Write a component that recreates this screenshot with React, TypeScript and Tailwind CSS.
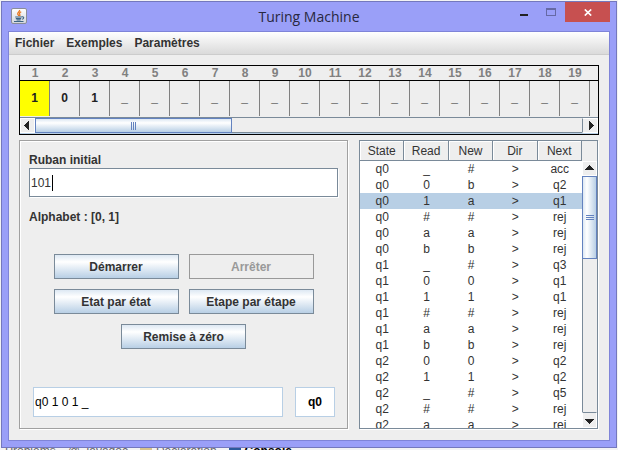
import React from "react";

const columns = ["State", "Read", "New", "Dir", "Next"];

const transitions = [
  ["q0", "_", "#", ">", "acc"],
  ["q0", "0", "b", ">", "q2"],
  ["q0", "1", "a", ">", "q1"],
  ["q0", "#", "#", ">", "rej"],
  ["q0", "a", "a", ">", "rej"],
  ["q0", "b", "b", ">", "rej"],
  ["q1", "_", "#", ">", "q3"],
  ["q1", "0", "0", ">", "q1"],
  ["q1", "1", "1", ">", "q1"],
  ["q1", "#", "#", ">", "rej"],
  ["q1", "a", "a", ">", "rej"],
  ["q1", "b", "b", ">", "rej"],
  ["q2", "0", "0", ">", "q2"],
  ["q2", "1", "1", ">", "q2"],
  ["q2", "_", "#", ">", "q5"],
  ["q2", "#", "#", ">", "rej"],
  ["q2", "a", "a", ">", "rej"],
];

const tape = ["1", "0", "1", ...Array<string>(17).fill("_")];

function JavaIcon() {
  return (
    <svg width="16" height="16" viewBox="0 0 16 16" className="shrink-0" aria-hidden="true">
      <defs>
        <linearGradient id="tile" x1="0" y1="0" x2="0" y2="1">
          <stop offset="0" stopColor="#ffffff" />
          <stop offset="1" stopColor="#d2d6dc" />
        </linearGradient>
      </defs>
      <rect x="0.5" y="0.5" width="15" height="15" rx="1.5" fill="url(#tile)" stroke="#8a8d98" />
      <path d="M8.5 2c.8 1.600-2.500 2.400-1.700 4.200.3.700.9 1 .9 1.700M10.200 3.800c-1.500.8-2.200 1.500-1.400 2.700.4.600.1 1.100-.3 1.500" fill="none" stroke="#e8761f" strokeWidth="1.300" />
      <path d="M4.200 9h6.600M4.800 10.600h5.400M5.600 12h4M3 13.500h9.500M10.800 8.800c2.600-.5 2.400 2 .2 2.400" fill="none" stroke="#3c6484" strokeWidth="1.100" />
    </svg>
  );
}

function Arrow({ points }: { points: string }) {
  return (
    <svg width="9" height="9" viewBox="0 0 9 9" className="shrink-0" shapeRendering="crispEdges" aria-hidden="true">
      <polygon points={points} fill="#222" />
    </svg>
  );
}

function ActionButton({ children, disabled }: { children: React.ReactNode; disabled?: boolean }) {
  return (
    <button
      disabled={disabled}
      className="h-[25px] w-[125px] border border-[#7a8a99] bg-linear-to-b from-[#dde8f3] via-white via-30% to-[#b8cfe5] text-center font-bold text-[#333] disabled:border-[#999] disabled:bg-none disabled:text-[#999]"
    >
      {children}
    </button>
  );
}

export default function App() {
  return (
    <div className="flex h-screen flex-col bg-[#f3f3f4] px-px pt-px font-['Liberation_Sans',Arial,sans-serif] text-[12px] leading-4 text-[#333]">
      <div className="flex min-h-0 flex-1 flex-col border border-[#7478bd] bg-[#9a9ff8] px-[6px] pb-[6px]">
        <header className="flex h-[29px] shrink-0 items-start pl-[3px]">
          <div className="pt-[6px]"><JavaIcon /></div>
          <h1 className="min-w-0 flex-1 pt-[5px] pl-[80px] text-center font-['Open_Sans','Noto_Sans',sans-serif] text-[14px] leading-5 text-[#282840]">Turing Machine</h1>
          <button aria-label="Réduire" className="flex h-5 w-[26px] items-center justify-center pt-[5px]">
            <span className="h-[2px] w-2 bg-[#222]" />
          </button>
          <button aria-label="Agrandir" className="flex h-5 w-[28px] items-center justify-center">
            <span className="h-2 w-[10px] border border-t-2 border-[#6669a5]" />
          </button>
          <button aria-label="Fermer" className="flex h-5 w-[45px] items-center justify-center bg-[#c75050]">
            <svg width="8" height="7" viewBox="0 0 8 7"><path d="M.8.5 7.200 6.500M7.200.5.8 6.500" stroke="#fff" strokeWidth="1.700" /></svg>
          </button>
        </header>

        <div className="flex min-h-0 flex-1 flex-col border border-[#7f84d8] bg-[#eee]">
          <nav className="flex h-[23px] shrink-0 items-center gap-3 border-b border-[#ccc] bg-linear-to-b from-white to-[#dadada] px-[6px] font-bold">
            <button>Fichier</button>
            <button>Exemples</button>
            <button>Paramètres</button>
          </nav>

          <main className="flex min-h-0 flex-1 flex-col gap-[5px] px-[10px] pt-[10px] pb-[11px]">
            <section aria-label="Ruban" className="flex h-[70px] shrink-0 flex-col border border-black">
              <div className="flex min-h-0 flex-1 overflow-hidden font-bold">
                {tape.map((symbol, i) => (
                  <div key={i} className="flex w-[30px] shrink-0 flex-col text-center">
                    <div className="h-[15px] border-b border-black leading-[15px] text-[#808080]">{i < 19 ? i + 1 : ""}</div>
                    <div className={`h-[35px] border-r border-[#808080] leading-[35px] text-[#222] ${i === 0 ? "bg-[#ff0]" : ""}`}>{i < 19 ? symbol : ""}</div>
                  </div>
                ))}
              </div>
              <div className="flex h-[17px] shrink-0 border-y border-t-[#7a8a99] border-b-[#b8cfe5]">
                <button aria-label="Vers la gauche" className="flex w-[15px] items-center justify-center border border-white"><Arrow points="6,-1 6,10 1,4.5" /></button>
                <div className="flex min-w-0 flex-1">
                  <div className="flex w-[36%] items-center justify-center gap-px border border-[#6382bf] bg-linear-to-b from-[#dde8f3] via-white via-30% to-[#b8cfe5]">
                    <span className="h-2 w-px bg-[#6382bf]" /><span className="h-2 w-px bg-[#6382bf]" /><span className="h-2 w-px bg-[#6382bf]" />
                  </div>
                  <div className="flex-1 border-b border-[#7a8a99]" />
                </div>
                <button aria-label="Vers la droite" className="flex w-[16px] items-center justify-center border border-white border-l-[#7a8a99]"><Arrow points="3,-1 3,10 8,4.5" /></button>
              </div>
            </section>

            <div className="grid min-h-0 flex-1 grid-cols-[329fr_239fr] grid-rows-[minmax(0,1fr)] gap-[11px] pr-px">
              <section className="flex min-w-0 flex-col border border-[#a0a0a0] px-[9px] pt-3 pb-[11px] shadow-[1px_1px_0_#fff,inset_1px_1px_0_#fff]">
                <label htmlFor="tape-input" className="leading-[15px] font-bold">Ruban initial</label>
                <div className="flex h-[29px] shrink-0 items-center border border-[#7a8a99] bg-white pl-px shadow-[1px_1px_0_#fff]">
                  <input id="tape-input" defaultValue="101" className="h-4 w-[22px] border-r border-black text-[12px] outline-none" />
                </div>
                <p className="pt-3 font-bold">Alphabet : [0, 1]</p>
                <div className="flex flex-wrap justify-center gap-[10px] pt-[29px]">
                  <ActionButton>Démarrer</ActionButton>
                  <ActionButton disabled>Arrêter</ActionButton>
                  <ActionButton>Etat par état</ActionButton>
                  <ActionButton>Etape par étape</ActionButton>
                  <ActionButton>Remise à zéro</ActionButton>
                </div>
                <div className="mt-auto flex gap-3 pr-[3px] pl-1">
                  <input aria-label="Configuration" readOnly defaultValue="q0 1 0 1 _" className="h-[30px] min-w-0 flex-1 border border-[#b8cfe5] bg-white pl-px text-[12px] text-black" />
                  <input aria-label="Etat courant" readOnly defaultValue="q0" className="h-[30px] w-[40px] border border-[#b8cfe5] bg-white text-center text-[12px] font-bold text-black" />
                </div>
              </section>

              <section className="flex min-w-0 border border-[#7a8a99] bg-white shadow-[1px_1px_0_#fff]">
                <div className="min-w-0 flex-1 overflow-hidden">
                  <table className="w-full table-fixed border-separate border-spacing-0 text-center">
                    <thead>
                      <tr>
                        {columns.map((c) => (
                          <th key={c} className="h-5 border-r border-b border-[#7a8a99] bg-[#eee] p-0 font-normal shadow-[inset_1px_1px_0_#fff]">{c}</th>
                        ))}
                      </tr>
                    </thead>
                    <tbody>
                      {transitions.map((row, r) => (
                        <tr key={r} className={r === 2 ? "bg-[#b8cfe5]" : ""}>
                          {row.map((v, c) => (
                            <td key={c} className="h-4 p-0">{v}</td>
                          ))}
                        </tr>
                      ))}
                    </tbody>
                  </table>
                </div>
                <div className="flex w-[15px] shrink-0 flex-col bg-[#eee]">
                  <div className="h-5 shrink-0" />
                  <button aria-label="Vers le haut" className="flex h-[15px] shrink-0 items-center justify-center border border-white"><Arrow points="-1,6 10,6 4.5,1" /></button>
                  <div className="flex min-h-0 flex-1 flex-col border-l border-[#7a8a99]">
                    <div className="-ml-px flex h-[35%] flex-col items-center justify-center gap-px border border-[#6382bf] bg-linear-to-r from-[#dde8f3] via-white via-30% to-[#b8cfe5]">
                      <span className="h-px w-2 bg-[#6382bf]" /><span className="h-px w-2 bg-[#6382bf]" /><span className="h-px w-2 bg-[#6382bf]" />
                    </div>
                  </div>
                  <button aria-label="Vers le bas" className="flex h-[16px] shrink-0 items-center justify-center border border-white border-t-[#7a8a99]"><Arrow points="-1,3 10,3 4.5,8" /></button>
                </div>
              </section>
            </div>
          </main>
        </div>
      </div>
      <footer className="flex h-[2px] shrink-0 items-start gap-3 overflow-hidden pl-1 leading-[6px] text-[#666]">
        <span>Problems</span>
        <span>@ Javadoc</span>
        <span className="flex gap-1"><i className="h-2 w-3 bg-[#d8c48c]" />Declaration</span>
        <span className="flex gap-1 font-bold text-black"><i className="h-2 w-3 bg-[#2c5a9c]" />Console</span>
      </footer>
    </div>
  );
}
